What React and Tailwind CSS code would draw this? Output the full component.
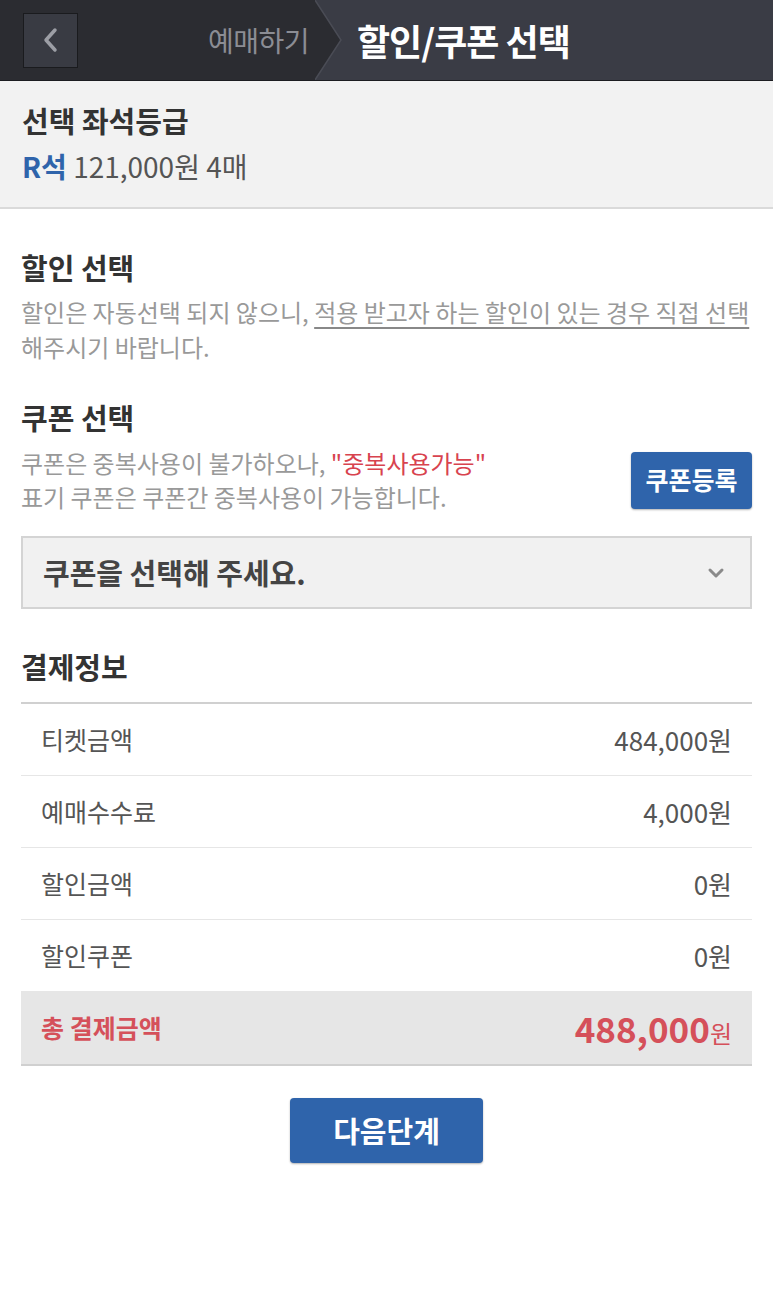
import { ChevronDown } from "lucide-react";

const font = { fontFamily: '"Noto Sans CJK KR", "Noto Sans", sans-serif' };

function Header() {
  return (
    <header className="flex h-[81px] items-stretch border-b border-[#1c1d21] bg-[#3a3c45]">
      <div className="flex w-[315px] items-center justify-between bg-[#2b2c31] pl-[23px] pr-[6px]">
        <button
          type="button"
          className="flex h-[55px] w-[55px] items-center justify-center border border-[#1a1b1e] bg-[#393b43]"
        >
          <svg width="22" height="26" viewBox="0 0 22 26" fill="none">
            <path d="M15 3 L6 13 L15 23" stroke="#9c9ea5" strokeWidth="3.5" strokeLinecap="round" strokeLinejoin="round" />
          </svg>
        </button>
        <span className="text-[28px] tracking-[-0.5px] text-[#8b8d94]">예매하기</span>
      </div>
      <svg width="30" height="80" viewBox="0 0 30 80" className="shrink-0">
        <polygon points="0,0 26,40 0,80" fill="#2b2c31" />
        <polyline points="0,0 26,40 0,80" fill="none" stroke="#4a4c55" strokeWidth="1.5" />
      </svg>
      <h1 className="flex items-center pl-[12px] text-[36px] font-bold tracking-[-1px] text-white">할인/쿠폰 선택</h1>
    </header>
  );
}

function Row({ label, value }) {
  return (
    <div className="flex h-[72px] items-center justify-between border-b border-[#e6e6e6] px-[20px] text-[#555]">
      <span className="text-[25px]">{label}</span>
      <span className="text-[26px]">{value}</span>
    </div>
  );
}

export default function App() {
  return (
    <div className="min-h-[1313px] bg-white" style={font}>
      <Header />

      <section className="border-b-2 border-[#dadada] bg-[#f2f2f2] px-[22px] pb-[23px] pt-[21px]">
        <h2 className="text-[29px] font-bold leading-[36px] text-[#333]">선택 좌석등급</h2>
        <p className="mt-[10px] text-[28px] leading-[36px] text-[#555]">
          <span className="font-bold text-[#2f64ab]">R석</span> 121,000원 4매
        </p>
      </section>

      <main className="px-[21px]">
        <h2 className="mt-[40px] text-[29px] font-bold leading-[36px] text-[#333]">할인 선택</h2>
        <p className="mt-[9px] whitespace-nowrap text-[24px] leading-[35px] text-[#999]">
          할인은 자동선택 되지 않으니,{" "}
          <span className="underline decoration-[#888] underline-offset-[5px]">
            적용 받고자 하는 할인이 있는 경우 직접 선택
          </span>
          <br />
          해주시기 바랍니다.
        </p>

        <h2 className="mt-[35px] text-[29px] font-bold leading-[36px] text-[#333]">쿠폰 선택</h2>
        <div className="mt-[11px] flex items-center justify-between">
          <p className="text-[24px] leading-[34px] text-[#999]">
            쿠폰은 중복사용이 불가하오나, <span className="text-[#d8434f]">"중복사용가능"</span>
            <br />
            표기 쿠폰은 쿠폰간 중복사용이 가능합니다.
          </p>
          <button
            type="button"
            className="flex h-[57px] w-[121px] shrink-0 items-center justify-center rounded-[4px] bg-[#2f64ab] text-[25px] font-bold text-white shadow-[0_1px_2px_rgba(0,0,0,0.3)]"
          >
            쿠폰등록
          </button>
        </div>

        <div className="mt-[22px] flex h-[73px] items-center justify-between border-2 border-[#d4d4d4] bg-[#f1f1f1] pl-[20px] pr-[22px]">
          <span className="text-[29px] font-bold text-[#444]">쿠폰을 선택해 주세요.</span>
          <ChevronDown size={24} strokeWidth={3} color="#8a8a8a" />
        </div>

        <h2 className="mt-[39px] text-[29px] font-bold leading-[36px] text-[#333]">결제정보</h2>
        <div className="mt-[18px] border-t-2 border-[#d0d0d0]">
          <Row label="티켓금액" value="484,000원" />
          <Row label="예매수수료" value="4,000원" />
          <Row label="할인금액" value="0원" />
          <Row label="할인쿠폰" value="0원" />
          <div className="flex h-[74px] items-center justify-between border-b-2 border-[#d0d0d0] bg-[#e6e6e6] px-[20px] text-[#d5505a]">
            <span className="text-[25px] font-bold">총 결제금액</span>
            <span className="flex items-baseline">
              <span className="text-[35px] font-bold">488,000</span>
              <span className="text-[24px]">원</span>
            </span>
          </div>
        </div>

        <div className="mt-[32px] flex justify-center">
          <button
            type="button"
            className="h-[65px] w-[193px] rounded-[4px] bg-[#2f64ab] text-[29px] font-bold text-white shadow-[0_1px_2px_rgba(0,0,0,0.3)]"
          >
            다음단계
          </button>
        </div>
      </main>
    </div>
  );
}
